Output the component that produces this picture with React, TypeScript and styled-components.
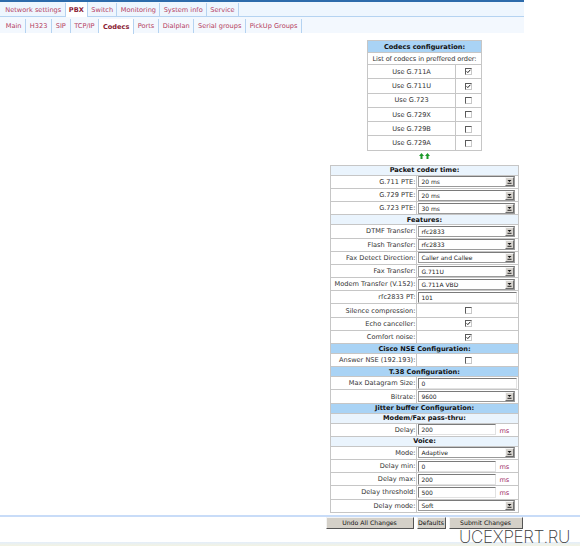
import React from "react";
import styled, { createGlobalStyle } from "styled-components";

const GlobalStyle = createGlobalStyle`
  html, body {
    margin: 0;
    padding: 0;
    background: #fff;
  }
  body {
    width: 580px;
    height: 546px;
    overflow: hidden;
    position: relative;
    font-family: "DejaVu Sans", Verdana, sans-serif;
    font-size: 6.6px;
    color: #333;
  }
`;

const TopBar = styled.div`
  width: 524px;
  height: 17px;
  box-sizing: border-box;
  background: #eef6fe;
  border-top: 2px solid #2d6bab;
  border-bottom: 1px solid #b5d3f1;
  display: flex;
  align-items: flex-end;
  padding-left: 2px;
`;

const SubBar = styled.div`
  width: 524px;
  height: 16px;
  box-sizing: border-box;
  background: #f3f8fe;
  display: flex;
  align-items: flex-end;
  padding-left: 2px;
`;

const Tab = styled.div<{ $active?: boolean; $h: number; $pad: number }>`
  height: ${(p) => p.$h}px;
  display: flex;
  align-items: center;
  padding: 0 ${(p) => p.$pad}px;
  border-right: 1px solid #b5d3f1;
  color: ${(p) => (p.$active ? "#8a1a32" : "#b5405e")};
  font-weight: ${(p) => (p.$active ? "bold" : "normal")};
  background: ${(p) => (p.$active ? "#fff" : "transparent")};
  margin-bottom: ${(p) => (p.$active ? "-1px" : "0")};
  white-space: nowrap;
`;

const Main = styled.div`
  width: 249px;
  margin-left: 300px;
  display: flex;
  flex-direction: column;
  align-items: center;
`;

const CodecTable = styled.table`
  margin-top: 7px;
  width: 115px;
  border-collapse: collapse;
  border: 1px solid #b0b0b0;
  & td, & th {
    border: 1px solid #c6c6c6;
    padding: 0;
    text-align: center;
  }
`;

const BlueHead = styled.th`
  height: 11px;
  background: #a9d3f5;
  color: #111;
  font-weight: bold;
`;

const LightHead = styled.th<{ $blue?: boolean }>`
  height: 9px;
  background: ${(p) => (p.$blue ? "#a9d3f5" : "#eaf4fd")};
  color: #111;
  font-weight: bold;
  white-space: nowrap;
`;

const CodecNote = styled.td`
  height: 11px;
  color: #333;
  white-space: nowrap;
  letter-spacing: -0.1px;
`;

const CodecCell = styled.td<{ $w?: number }>`
  height: 13.3px;
  width: ${(p) => (p.$w ? `${p.$w}px` : "auto")};
  color: #333;
`;

const Arrows = styled.div`
  height: 14px;
  display: flex;
  align-items: flex-start;
  gap: 1px;
  padding-top: 2px;
  box-sizing: border-box;
`;

const ParamTable = styled.table`
  width: 189px;
  border-collapse: collapse;
  border: 1px solid #b0b0b0;
  & td, & th {
    border: 1px solid #c6c6c6;
    padding: 0;
  }
`;

const Label = styled.td`
  width: 87px;
  height: 12.2px;
  text-align: right;
  padding-right: 1px !important;
  white-space: nowrap;
  color: #333;
`;

const Value = styled.td<{ $center?: boolean }>`
  width: 100px;
  padding-left: 1px !important;
  text-align: ${(p) => (p.$center ? "center" : "left")};
  vertical-align: middle;
`;

const SelectBox = styled.div`
  width: 97px;
  height: 11px;
  box-sizing: border-box;
  border: 1px solid #9a9a9a;
  border-top-color: #7a7a7a;
  background: #fff;
  display: flex;
  align-items: center;
  justify-content: space-between;
  padding-left: 2px;
  color: #222;
  font-size: 6px;
`;

const DropButton = styled.span`
  width: 9px;
  height: 9px;
  box-sizing: border-box;
  background: #d6d3ce;
  border: 1px solid;
  border-color: #f6f6f6 #6e6e6e #6e6e6e #f6f6f6;
  display: flex;
  align-items: center;
  justify-content: center;
`;

const TextInput = styled.div<{ $w: number }>`
  width: ${(p) => p.$w}px;
  height: 11px;
  box-sizing: border-box;
  border: 1px solid;
  border-color: #7a7a7a #e2e2e2 #e2e2e2 #7a7a7a;
  background: #fff;
  display: flex;
  align-items: center;
  padding-left: 2px;
  color: #222;
  font-size: 6px;
`;

const UnitRow = styled.div`
  display: flex;
  align-items: center;
  gap: 3px;
`;

const Unit = styled.span`
  color: #a2306a;
  padding-top: 2px;
`;

const Box = styled.span`
  display: inline-flex;
  width: 7px;
  height: 7px;
  box-sizing: border-box;
  border: 1px solid;
  border-color: #5a5a5a #c8c8c8 #c8c8c8 #5a5a5a;
  background: #fff;
  vertical-align: middle;
  align-items: center;
  justify-content: center;
`;

const Divider = styled.div`
  margin-top: 2px;
  width: 580px;
  height: 2px;
  background: #c8dcf8;
`;

const ButtonRow = styled.div`
  width: 249px;
  margin-left: 300px;
  display: flex;
  justify-content: center;
  gap: 3px;
  padding-right: 1px;
  box-sizing: border-box;
`;

const Button = styled.div<{ $w: number }>`
  width: ${(p) => p.$w}px;
  height: 12px;
  box-sizing: border-box;
  background: #d4d0c8;
  border: 1px solid;
  border-color: #f4f4f4 #555 #555 #f4f4f4;
  display: flex;
  align-items: center;
  justify-content: center;
  color: #111;
  white-space: nowrap;
  font-size: 6.2px;
`;

const Footer = styled.div`
  margin-top: 13px;
  width: 580px;
  height: 4px;
  background: linear-gradient(#e4eefa, #f3f3e2);
`;

const Watermark = styled.div`
  position: absolute;
  left: 459px;
  top: 531px;
  font-family: Inter, "DejaVu Sans", sans-serif;
  font-weight: 200;
  font-size: 17px;
  letter-spacing: -0.3px;
  color: #3a3a3a;
  line-height: 12px;
`;

type Row =
  | { kind: "section"; label: string; blue?: boolean }
  | { kind: "select"; label: string; value: string }
  | { kind: "input"; label: string; value: string; unit?: string }
  | { kind: "check"; label: string; checked: boolean };

const rows: Row[] = [
  { kind: "section", label: "Packet coder time:" },
  { kind: "select", label: "G.711 PTE:", value: "20 ms" },
  { kind: "select", label: "G.729 PTE:", value: "20 ms" },
  { kind: "select", label: "G.723 PTE:", value: "30 ms" },
  { kind: "section", label: "Features:" },
  { kind: "select", label: "DTMF Transfer:", value: "rfc2833" },
  { kind: "select", label: "Flash Transfer:", value: "rfc2833" },
  { kind: "select", label: "Fax Detect Direction:", value: "Caller and Callee" },
  { kind: "select", label: "Fax Transfer:", value: "G.711U" },
  { kind: "select", label: "Modem Transfer (V.152):", value: "G.711A VBD" },
  { kind: "input", label: "rfc2833 PT:", value: "101" },
  { kind: "check", label: "Silence compression:", checked: false },
  { kind: "check", label: "Echo canceller:", checked: true },
  { kind: "check", label: "Comfort noise:", checked: true },
  { kind: "section", label: "Cisco NSE Configuration:", blue: true },
  { kind: "check", label: "Answer NSE (192.193):", checked: false },
  { kind: "section", label: "T.38 Configuration:", blue: true },
  { kind: "input", label: "Max Datagram Size:", value: "0" },
  { kind: "select", label: "Bitrate:", value: "9600" },
  { kind: "section", label: "Jitter buffer Configuration:", blue: true },
  { kind: "section", label: "Modem/Fax pass-thru:" },
  { kind: "input", label: "Delay:", value: "200", unit: "ms" },
  { kind: "section", label: "Voice:" },
  { kind: "select", label: "Mode:", value: "Adaptive" },
  { kind: "input", label: "Delay min:", value: "0", unit: "ms" },
  { kind: "input", label: "Delay max:", value: "200", unit: "ms" },
  { kind: "input", label: "Delay threshold:", value: "500", unit: "ms" },
  { kind: "select", label: "Delay mode:", value: "Soft" },
];

const codecs = [
  { name: "Use G.711A", on: true },
  { name: "Use G.711U", on: true },
  { name: "Use G.723", on: false },
  { name: "Use G.729X", on: false },
  { name: "Use G.729B", on: false },
  { name: "Use G.729A", on: false },
];

const topTabs = ["Network settings", "PBX", "Switch", "Monitoring", "System info", "Service"];
const subTabs = ["Main", "H323", "SIP", "TCP/IP", "Codecs", "Ports", "Dialplan", "Serial groups", "PickUp Groups"];

const CheckBox: React.FC<{ checked: boolean }> = ({ checked }) => (
  <Box>
    {checked && (
      <svg width="5" height="5" viewBox="0 0 5 5">
        <path d="M0.6 2.3 L1.8 3.6 L4.4 0.8" fill="none" stroke="#222" strokeWidth="1" />
      </svg>
    )}
  </Box>
);

const Select: React.FC<{ value: string }> = ({ value }) => (
  <SelectBox>
    <span>{value}</span>
    <DropButton>
      <svg width="5" height="5" viewBox="0 0 5 5">
        <path d="M0.5 1 H4.5 L2.5 3 Z" fill="#111" />
        <rect x="0.5" y="3.8" width="4" height="0.9" fill="#111" />
      </svg>
    </DropButton>
  </SelectBox>
);

const renderValue = (row: Row) => {
  if (row.kind === "select") {
    return (
      <Value>
        <Select value={row.value} />
      </Value>
    );
  }
  if (row.kind === "input") {
    return (
      <Value>
        {row.unit ? (
          <UnitRow>
            <TextInput $w={78}>{row.value}</TextInput>
            <Unit>{row.unit}</Unit>
          </UnitRow>
        ) : (
          <TextInput $w={99}>{row.value}</TextInput>
        )}
      </Value>
    );
  }
  if (row.kind === "check") {
    return (
      <Value $center>
        <CheckBox checked={row.checked} />
      </Value>
    );
  }
  return null;
};

const App: React.FC = () => {
  return (
    <>
      <GlobalStyle />
      <TopBar>
        {topTabs.map((t) => (
          <Tab key={t} $h={t === "PBX" ? 15 : 13} $pad={3.3} $active={t === "PBX"}>
            {t}
          </Tab>
        ))}
      </TopBar>
      <SubBar>
        {subTabs.map((t) => (
          <Tab key={t} $h={t === "Codecs" ? 15 : 14} $pad={3.7} $active={t === "Codecs"}>
            {t}
          </Tab>
        ))}
      </SubBar>

      <Main>
        <CodecTable>
          <tbody>
            <tr>
              <BlueHead colSpan={2}>Codecs configuration:</BlueHead>
            </tr>
            <tr>
              <CodecNote colSpan={2}>List of codecs in preffered order:</CodecNote>
            </tr>
            {codecs.map((c) => (
              <tr key={c.name}>
                <CodecCell>{c.name}</CodecCell>
                <CodecCell $w={25}>
                  <CheckBox checked={c.on} />
                </CodecCell>
              </tr>
            ))}
          </tbody>
        </CodecTable>

        <Arrows>
          <svg width="5" height="6" viewBox="0 0 5 6">
            <path d="M2.5 0 L5 3 H3.5 V6 H1.5 V3 H0 Z" fill="#1d9a2a" />
          </svg>
          <svg width="5" height="6" viewBox="0 0 5 6">
            <path d="M2.5 0 L5 3 H3.5 V6 H1.5 V3 H0 Z" fill="#1d9a2a" />
          </svg>
        </Arrows>

        <ParamTable>
          <tbody>
            {rows.map((row) =>
              row.kind === "section" ? (
                <tr key={row.label}>
                  <LightHead colSpan={2} $blue={row.blue}>
                    {row.label}
                  </LightHead>
                </tr>
              ) : (
                <tr key={row.label}>
                  <Label>{row.label}</Label>
                  {renderValue(row)}
                </tr>
              )
            )}
          </tbody>
        </ParamTable>
      </Main>

      <Divider />
      <ButtonRow>
        <Button $w={88}>Undo All Changes</Button>
        <Button $w={29}>Defaults</Button>
        <Button $w={74}>Submit Changes</Button>
      </ButtonRow>
      <Footer />
      <Watermark>UCEXPERT.RU</Watermark>
    </>
  );
};

export default App;
